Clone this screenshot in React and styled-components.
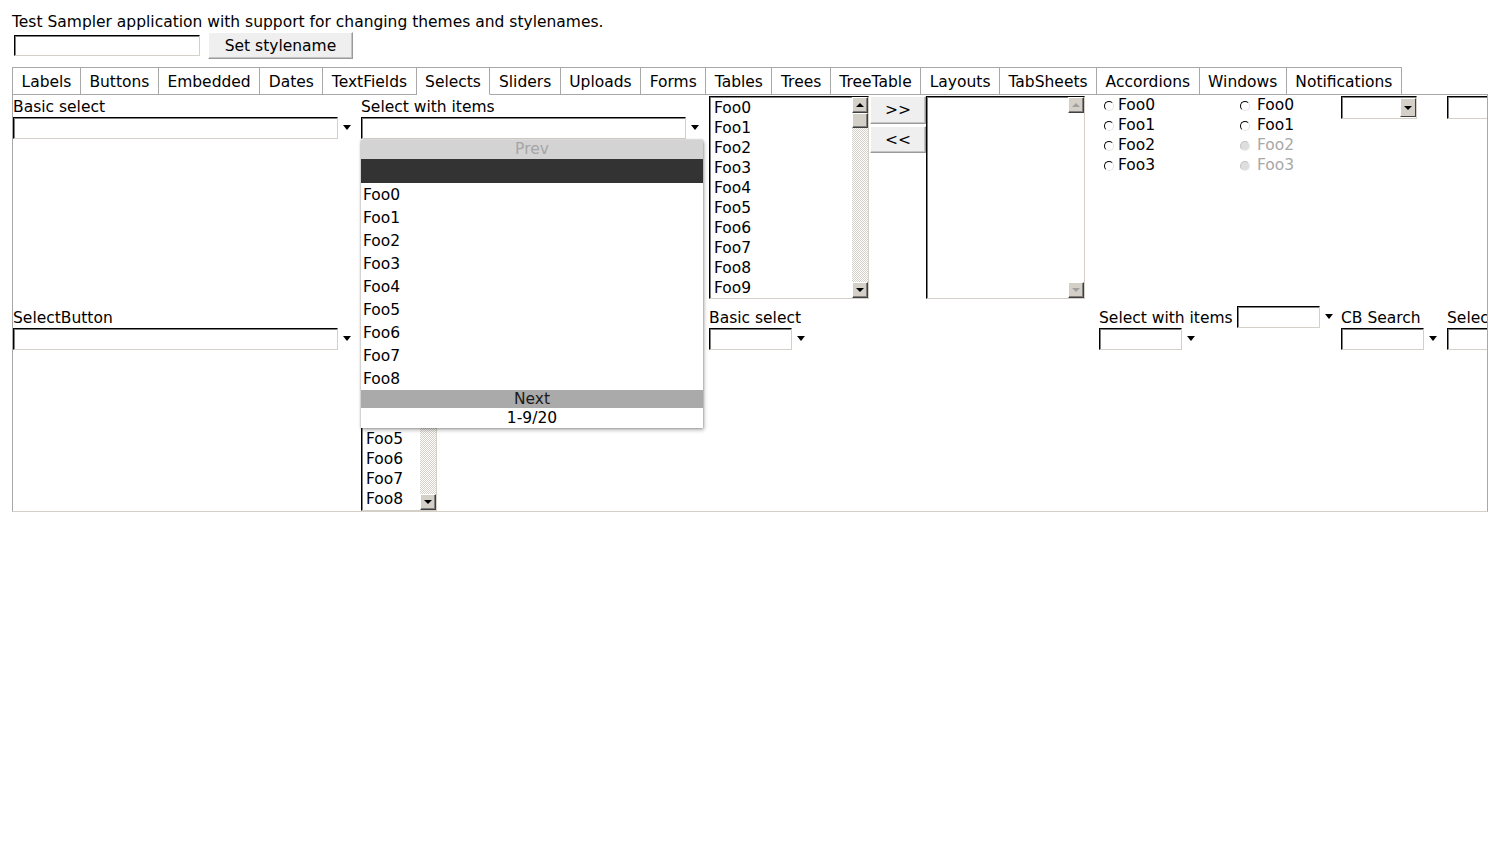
import React from 'react';
import styled, { createGlobalStyle, css } from 'styled-components';

const FONT = '"DejaVu Sans", "Liberation Sans", sans-serif';

const GlobalStyle = createGlobalStyle`
  html, body { margin: 0; padding: 0; background: #fff; }
  body { font-family: ${FONT}; font-size: 15.5px; color: #000; }
  * { box-sizing: border-box; }
`;

const Page = styled.div`
  padding: 11px 0 0 12px;
`;

const Intro = styled.div`
  height: 20px;
  padding-top: 2px;
  line-height: 18px;
  white-space: nowrap;
`;

const StyleRow = styled.div`
  display: flex;
  align-items: center;
  margin-top: 1px;
  height: 27px;
`;

const sunken = css`
  background: #fff;
  border: 1px solid;
  border-color: #000 #d4d0c8 #d4d0c8 #000;
  box-shadow: inset 1px 1px 0 #808080;
`;

const TextBox = styled.input`
  ${sunken};
  width: ${(p) => p.$w}px;
  height: ${(p) => p.$h || 22}px;
  margin: 0 0 0 ${(p) => p.$ml || 0}px;
  padding: 0 3px;
  font: inherit;
  flex: none;
  outline: none;
`;

const raised = css`
  background: #efefef;
  border: 1px solid;
  border-color: #fff #9a9a9a #9a9a9a #fff;
  box-shadow: inset -1px -1px 0 #c4c4c4;
`;

const ClassicButton = styled.button`
  ${raised};
  font: inherit;
  color: #000;
  padding: 0;
  width: ${(p) => p.$w}px;
  height: ${(p) => p.$h}px;
  margin-left: ${(p) => p.$ml || 0}px;
  flex: none;
  cursor: default;
`;

const TabBar = styled.div`
  display: flex;
  width: 1476px;
  height: 28px;
  margin-top: 8px;
`;

const Tab = styled.div`
  padding: 1px 8.5px 0;
  height: 28px;
  line-height: 26px;
  white-space: nowrap;
  border-top: 1px solid #a8a8a8;
  border-right: 1px solid #a8a8a8;
  border-bottom: 1px solid ${(p) => (p.$active ? '#fff' : '#a8a8a8')};
  &:first-child { border-left: 1px solid #a8a8a8; }
`;

const TabFiller = styled.div`
  flex: 1;
  border-bottom: 1px solid #a8a8a8;
`;

const Panel = styled.div`
  position: relative;
  width: 1476px;
  height: 417px;
  border-left: 1px solid #a8a8a8;
  border-right: 1px solid #a8a8a8;
  border-bottom: 1px solid #d4d0c8;
  display: grid;
  grid-template-columns: 348px 348px 390px 242px 106px 1fr;
  grid-template-rows: 211px 205px;
  overflow: hidden;
  &::after {
    content: '';
    position: absolute;
    left: 974px;
    right: 0;
    bottom: -1px;
    height: 1px;
    background: repeating-linear-gradient(90deg, #d4d0c8 0 1px, #fff 1px 2px);
  }
`;

const Cell = styled.div`
  position: relative;
  display: flex;
  flex-direction: ${(p) => (p.$row ? 'row' : 'column')};
  align-items: flex-start;
  min-width: 0;
  padding-top: ${(p) => p.$pt || 0}px;
`;

const Caption = styled.div`
  height: 22px;
  line-height: 22px;
  white-space: nowrap;
  display: flex;
  align-items: center;
  gap: 4px;
`;

const CaptionText = styled.span`
  position: relative;
  top: 1px;
`;

const SelectWrap = styled.div`
  display: flex;
  align-items: center;
  flex: none;
`;

const DropArrow = styled.span`
  width: 0;
  height: 0;
  border-left: 4px solid transparent;
  border-right: 4px solid transparent;
  border-top: 5px solid #000;
  margin-left: 5px;
  margin-top: -1px;
`;

const FilterSelect = ({ w }) => (
  <SelectWrap>
    <TextBox $w={w} readOnly />
    <DropArrow />
  </SelectWrap>
);

const ListBox = styled.div`
  ${sunken};
  display: flex;
  width: ${(p) => p.$w}px;
  height: ${(p) => p.$h}px;
  margin-top: ${(p) => p.$mt || 0}px;
  flex: none;
  overflow: hidden;
`;

const Items = styled.div`
  flex: 1;
  padding: 1px 0 0 4px;
  line-height: 20px;
  overflow: hidden;
  white-space: nowrap;
`;

const ScrollBar = styled.div`
  width: 16px;
  display: flex;
  flex-direction: column;
  background: ${(p) =>
    p.$disabled
      ? '#fff'
      : 'repeating-conic-gradient(#d4d0c8 0 25%, #fff 0 50%) 0 0 / 2px 2px'};
`;

const ScrollButton = styled.div`
  width: 16px;
  height: ${(p) => p.$h || 16}px;
  flex: none;
  background: #d4d0c8;
  border: 1px solid;
  border-color: #fff #404040 #404040 #fff;
  box-shadow: inset -1px -1px 0 #808080;
  display: flex;
  align-items: center;
  justify-content: center;
`;

const Tri = styled.span`
  width: 0;
  height: 0;
  border-left: 4px solid transparent;
  border-right: 4px solid transparent;
  ${(p) =>
    p.$up
      ? `border-bottom: 4px solid ${p.$dim ? '#a0a0a0' : '#000'};`
      : `border-top: 4px solid ${p.$dim ? '#a0a0a0' : '#000'};`}
`;

const TrackSpace = styled.div`
  flex: 1;
`;

const Scroller = ({ disabled, thumb = true }) => (
  <ScrollBar $disabled={disabled}>
    <ScrollButton>
      <Tri $up $dim={disabled} />
    </ScrollButton>
    {!disabled && thumb && <ScrollButton $h={15} />}
    <TrackSpace />
    <ScrollButton>
      <Tri $dim={disabled} />
    </ScrollButton>
  </ScrollBar>
);

const TwinButtons = styled.div`
  display: flex;
  flex-direction: column;
  gap: 2px;
  margin: 1px 0 0 1px;
`;

const TwinCol = styled.div`
  display: flex;
  align-items: flex-start;
`;

const RadioGroup = styled.div`
  width: 138px;
  flex: none;
  line-height: 20px;
`;

const RadioRow = styled.div`
  display: flex;
  align-items: center;
  height: 20px;
  color: ${(p) => (p.$disabled ? '#a8a8a8' : '#000')};
`;

const RadioDot = styled.span`
  width: 10px;
  height: 10px;
  border-radius: 50%;
  margin: 1px ${(p) => p.$mr}px 0 ${(p) => p.$ml}px;
  border: 1.5px solid;
  border-color: ${(p) =>
    p.$disabled ? '#c4c4c4 #ececec #ececec #c4c4c4' : '#000 #e4e4e4 #e4e4e4 #000'};
  background: ${(p) => (p.$disabled ? '#dedede' : '#fff')};
  flex: none;
`;

const NativeSelect = styled.div`
  ${sunken};
  width: 76px;
  height: 23px;
  margin-top: 1px;
  display: flex;
  justify-content: flex-end;
  padding: 1px 0;
`;

const NativeArrow = styled.div`
  width: 16px;
  height: 19px;
  background: #d4d0c8;
  border: 1px solid;
  border-color: #fff #404040 #404040 #fff;
  display: flex;
  align-items: center;
  justify-content: center;
`;

const Popup = styled.div`
  position: absolute;
  z-index: 10;
  top: 45px;
  left: 0;
  width: 342px;
  background: #fff;
  box-shadow: 0 0 2px rgba(0, 0, 0, 0.35), 1px 2px 4px rgba(0, 0, 0, 0.3);
`;

const PagerRow = styled.div`
  height: ${(p) => (p.$next ? 18 : 19)}px;
  line-height: 19px;
  text-align: center;
  background: ${(p) => (p.$next ? '#aaaaaa' : '#d3d3d3')};
  color: ${(p) => (p.$next ? '#1a1a1a' : '#a6a6a6')};
`;

const SelectedRow = styled.div`
  height: 24px;
  background: #333;
`;

const PopupItem = styled.div`
  height: 23px;
  line-height: 24px;
  padding-left: 2px;
`;

const Status = styled.div`
  height: 20px;
  line-height: 20px;
  text-align: center;
`;

const TABS = [
  'Labels', 'Buttons', 'Embedded', 'Dates', 'TextFields', 'Selects', 'Sliders',
  'Uploads', 'Forms', 'Tables', 'Trees', 'TreeTable', 'Layouts', 'TabSheets',
  'Accordions', 'Windows', 'Notifications',
];

const foo = (n) => Array.from({ length: n }, (_, i) => `Foo${i}`);

const Cap = ({ children }) => (
  <Caption>
    <CaptionText>{children}</CaptionText>
  </Caption>
);

export default function App() {
  return (
    <Page>
      <GlobalStyle />
      <Intro>Test Sampler application with support for changing themes and stylenames.</Intro>
      <StyleRow>
        <TextBox $w={186} $h={21} $ml={2} readOnly />
        <ClassicButton $w={145} $h={27} $ml={8}>Set stylename</ClassicButton>
      </StyleRow>

      <TabBar>
        {TABS.map((t) => (
          <Tab key={t} $active={t === 'Selects'}>{t}</Tab>
        ))}
        <TabFiller />
      </TabBar>

      <Panel>
        {/* Row 1 */}
        <Cell>
          <Cap>Basic select</Cap>
          <FilterSelect w={325} />
        </Cell>
        <Cell>
          <Cap>Select with items</Cap>
          <FilterSelect w={325} />
          <Popup>
            <PagerRow>Prev</PagerRow>
            <SelectedRow />
            {foo(9).map((f) => (
              <PopupItem key={f}>{f}</PopupItem>
            ))}
            <PagerRow $next>Next</PagerRow>
            <Status>1-9/20</Status>
          </Popup>
        </Cell>
        <Cell>
          <TwinCol>
            <ListBox $w={160} $h={203} $mt={1}>
              <Items>
                {foo(10).map((f) => (
                  <div key={f}>{f}</div>
                ))}
              </Items>
              <Scroller />
            </ListBox>
            <TwinButtons>
              <ClassicButton $w={56} $h={28}>&gt;&gt;</ClassicButton>
              <ClassicButton $w={56} $h={27}>&lt;&lt;</ClassicButton>
            </TwinButtons>
            <ListBox $w={159} $h={203} $mt={1}>
              <Items />
              <Scroller disabled />
            </ListBox>
          </TwinCol>
        </Cell>
        <Cell $row>
          <RadioGroup>
            {foo(4).map((f) => (
              <RadioRow key={f}>
                <RadioDot $ml={5} $mr={4} />
                {f}
              </RadioRow>
            ))}
          </RadioGroup>
          <RadioGroup>
            {foo(4).map((f, i) => (
              <RadioRow key={f} $disabled={i > 1}>
                <RadioDot $ml={3} $mr={7} $disabled={i > 1} />
                {f}
              </RadioRow>
            ))}
          </RadioGroup>
        </Cell>
        <Cell>
          <NativeSelect>
            <NativeArrow>
              <Tri />
            </NativeArrow>
          </NativeSelect>
        </Cell>
        <Cell $pt={1}>
          <TextBox $w={90} $h={23} readOnly />
        </Cell>

        {/* Row 2 */}
        <Cell>
          <Cap>SelectButton</Cap>
          <FilterSelect w={325} />
        </Cell>
        <Cell>
          <Caption />
          <ListBox $w={76} $h={184}>
            <Items>
              {foo(10).map((f) => (
                <div key={f}>{f}</div>
              ))}
            </Items>
            <Scroller />
          </ListBox>
        </Cell>
        <Cell>
          <Cap>Basic select</Cap>
          <FilterSelect w={83} />
        </Cell>
        <Cell>
          <Caption>
            <CaptionText>Select with items</CaptionText>
            <FilterSelect w={83} />
          </Caption>
          <FilterSelect w={83} />
        </Cell>
        <Cell>
          <Cap>CB Search</Cap>
          <FilterSelect w={83} />
        </Cell>
        <Cell>
          <Cap>Select</Cap>
          <FilterSelect w={83} />
        </Cell>
      </Panel>
    </Page>
  );
}
